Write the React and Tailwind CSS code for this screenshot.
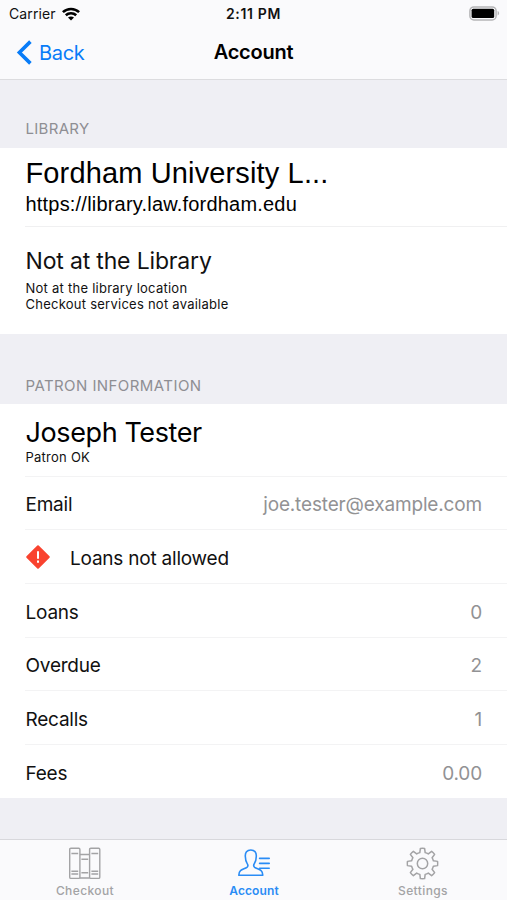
// Account screen: library details, patron information and the bottom tab bar.
import React from 'react';

// Signal icon of the status bar
const WifiIcon = () => (
  <svg width="18" height="14" viewBox="0 0 18 14" fill="none" stroke="#000" strokeWidth="2.6">
    <path d="M0.9 5.1C5.4.9 12.6.9 17.1 5.1" />
    <path d="M3.8 8.2C6.7 5.5 11.3 5.5 14.2 8.2" />
    <path d="M9 13.4L6 10.5C7.7 9 10.3 9 12 10.5Z" fill="#000" stroke="none" />
  </svg>
);

const BatteryIcon = () => (
  <svg width="31" height="15" viewBox="0 0 31 15" fill="none">
    <rect x="0.9" y="0.9" width="26.2" height="13" rx="4" stroke="#b5b5b7" strokeWidth="1.5" />
    <rect x="2.6" y="2.7" width="22.6" height="9.4" rx="1.6" fill="#000" />
    <path d="M28.6 5.1C30.6 5.8 30.6 8.8 28.6 9.5Z" fill="#b5b5b7" />
  </svg>
);

// Red diamond with an exclamation mark
const BlockIcon = () => (
  <svg width="26" height="26" viewBox="0 0 26 26">
    <path d="M13 2.2L23.8 13L13 23.8L2.2 13Z" fill="#f9432f" stroke="#f9432f" strokeWidth="2" strokeLinejoin="round" />
    <path d="M13 7.2V14.7M13 16.6V18.8" stroke="#fff" strokeWidth="2" />
  </svg>
);

const BooksIcon = () => (
  <svg width="33" height="33" viewBox="0 0 33 33" fill="none" stroke="currentColor" strokeWidth="1.4">
    <rect x="1.7" y="1.2" width="10.2" height="30.2" rx="1.2" />
    <rect x="21.6" y="1.2" width="10.2" height="30.2" rx="1.2" />
    <path d="M11.9 7.5H21.6M11.9 31H21.6M13.4 12.2H20.2" />
    <path d="M3.4 6.5H10.2M23.4 6.5H30.2M3.4 24.2H10.2M3.4 27H10.2M23.4 24.2H30.2M23.4 27H30.2M13.4 25.8H20.2" />
  </svg>
);

const PersonIcon = () => (
  <svg width="34" height="30" viewBox="0 0 34 30" fill="none" stroke="currentColor" strokeWidth="1.6" strokeLinejoin="round" strokeLinecap="round">
    <path d="M13.8 2C9.8 2 8.1 4.8 8.3 8.2C8.4 11.2 8.9 13.8 10.2 15.6C11.1 16.8 11 18.4 9.9 19.4C8.4 20.6 5.2 21.2 3.5 22.6C2.1 23.8 1.9 25.5 1.8 27.3H25.8C25.7 25.5 25.5 23.8 24.1 22.6C22.4 21.2 19.2 20.6 17.7 19.4C16.6 18.4 16.5 16.8 17.4 15.6C18.7 13.8 19.2 11.2 19.3 8.2C19.5 4.8 17.8 2 13.8 2Z" />
    <path d="M22.6 10.4H32.2M22.6 15.4H32.2M22.6 20.2H32.2" />
  </svg>
);

const TEETH = 8;

// Outline of the gear: each tooth is four points joined by arcs along the rim
const gearPath = () => {
  const point = (radius, angle) =>
    `${(16.5 + radius * Math.sin(angle)).toFixed(2)} ${(16.5 - radius * Math.cos(angle)).toFixed(2)}`;
  let d = '';
  for (let i = 0; i < TEETH; i += 1) {
    const a = (i * 2 * Math.PI) / TEETH;
    d += `${i === 0 ? 'M' : 'A11 11 0 0 1 '}${point(11.2, a - 0.24)}`;
    d += `L${point(15.2, a - 0.14)}A15 15 0 0 1 ${point(15.2, a + 0.14)}L${point(11.2, a + 0.24)}`;
  }
  return `${d}A11 11 0 0 1 ${point(11.2, -0.24)}Z`;
};

const GearIcon = () => (
  <svg width="33" height="33" viewBox="0 0 33 33" fill="none" stroke="currentColor" strokeWidth="1.5" strokeLinejoin="round">
    <path d={gearPath()} />
    <circle cx="16.5" cy="16.5" r="5.2" />
  </svg>
);

const SectionTitle = ({ children, className }) => (
  <div className={`flex shrink-0 items-end bg-[#efeff4] pl-[25.5px] text-[15px] leading-[18px] text-[#8e8e93] ${className}`}>
    <h2>{children}</h2>
  </div>
);

// Label on the left, optional value on the right
const Row = ({ label, value, icon, className }) => (
  <div className={`ml-[25px] flex items-center justify-between border-b border-[#f3f3f4] pr-[25px] text-[19px] last:border-b-0 ${className}`}>
    <div className="flex items-center">
      {icon && <span className="mt-[1px] mr-[18.5px]">{icon}</span>}
      <span className="pt-[5px] pl-[0.5px] tracking-[-0.22px]">{label}</span>
    </div>
    <span className="pt-[5px] tracking-[-0.16px] text-[#929294]">{value}</span>
  </div>
);

const Tab = ({ icon, label, className }) => (
  <div className={`flex flex-1 flex-col items-center ${className}`}>
    <div className="flex h-[34px] items-center">{icon}</div>
    <span className="mt-[3px] pl-[1px] text-[12px] leading-[15px]">{label}</span>
  </div>
);

export default function App() {
  return (
    <div className="flex h-[900px] w-[507px] flex-col overflow-hidden bg-[#efeff4] font-['Inter',sans-serif] text-[#111]">
      {/* Status bar and navigation */}
      <header className="h-[80px] shrink-0 border-b border-[#dcdcdf] bg-[#fafafc]">
        <div className="grid h-[27px] grid-cols-3 items-center pr-[7px] pl-[9px] text-[14px]">
          <div className="flex items-center gap-[6px]">
            <span className="tracking-[0.1px]">Carrier</span>
            <WifiIcon />
          </div>
          <span className="pr-[2px] text-center font-semibold tracking-[0.65px]">2:11 PM</span>
          <div className="flex justify-end">
            <BatteryIcon />
          </div>
        </div>
        <div className="grid h-[50px] grid-cols-3 items-center pr-[16px] pl-[16px] text-[20px]">
          <div className="flex items-center gap-[7px] text-[#087cf8]">
            <svg width="16" height="25" viewBox="0 0 16 25" fill="none" stroke="currentColor" strokeWidth="3.6">
              <path d="M14.4 1.6L3.4 12.5L14.4 23.4" />
            </svg>
            <span className="pt-[2px] tracking-[-0.3px]">Back</span>
          </div>
          <h1 className="text-center font-semibold tracking-[-0.25px] text-black">Account</h1>
        </div>
      </header>

      <SectionTitle className="h-[68px] pb-[10px] tracking-[0.3px]">LIBRARY</SectionTitle>
      <section className="h-[186px] shrink-0 bg-white">
        <div className="ml-[25px] h-[79px] border-b border-[#f0f0f1] pt-[8px] pl-[0.5px] font-['Liberation_Sans',sans-serif] text-black">
          <div className="text-[29px] leading-[34px] tracking-[0.14px]">Fordham University L...</div>
          <div className="text-[20px] leading-[28px] tracking-[0.2px]">https://library.law.fordham.edu</div>
        </div>
        <div className="ml-[25px] pt-[19px] pl-[0.5px]">
          <div className="text-[23px] leading-[30px] tracking-[-0.17px]">Not at the Library</div>
          <p className="mt-[4px] text-[13px] leading-[16px] tracking-[0.25px]">
            Not at the library location
            <br />
            Checkout services not available
          </p>
        </div>
      </section>

      <SectionTitle className="h-[70px] pb-[9px] tracking-[0.43px]">PATRON INFORMATION</SectionTitle>
      <section className="h-[394px] shrink-0 bg-white">
        <div className="ml-[25px] h-[73px] border-b border-[#f3f3f4] pt-[12px] pl-[0.5px]">
          <div className="text-[27px] leading-[34px] tracking-[-0.4px] text-black">Joseph Tester</div>
          <div className="text-[13px] leading-[15px] tracking-[0.25px]">Patron OK</div>
        </div>
        <Row className="h-[53px]" label="Email" value="joe.tester@example.com" />
        <Row className="h-[54px]" label="Loans not allowed" icon={<BlockIcon />} />
        <Row className="h-[54px]" label="Loans" value="0" />
        <Row className="h-[53px]" label="Overdue" value="2" />
        <Row className="h-[54px]" label="Recalls" value="1" />
        <Row className="h-[53px]" label="Fees" value="0.00" />
      </section>

      {/* Bottom tab bar */}
      <nav className="mt-auto flex h-[61px] shrink-0 border-t border-[#d8d8dc] bg-[#fafafc] pt-[6px]">
        <Tab className="font-medium tracking-[0.4px] text-[#a3a3a5]" icon={<BooksIcon />} label="Checkout" />
        <Tab className="font-semibold tracking-[0.1px] text-[#2a8cf5]" icon={<PersonIcon />} label="Account" />
        <Tab className="font-medium tracking-[0.4px] text-[#a3a3a5]" icon={<GearIcon />} label="Settings" />
      </nav>
    </div>
  );
}
